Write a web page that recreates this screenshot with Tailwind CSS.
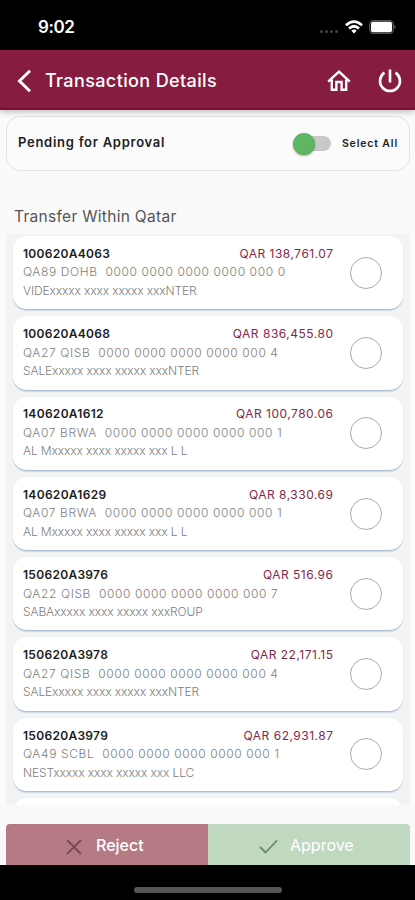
<!DOCTYPE html>
<html lang="en">
<head>
<meta charset="utf-8">
<title>Transaction Details</title>
<script src="https://cdn.jsdelivr.net/npm/@tailwindcss/browser@4"></script>
</head>
<body class="h-[900px] w-[415px] overflow-hidden bg-[#fafafa] font-['Inter','Liberation_Sans',sans-serif]">
<div class="flex h-[900px] flex-col">
  <div class="flex h-[50px] shrink-0 items-center bg-black pt-1 pl-[38px] pr-[19px] text-white">
    <span class="text-[17px] leading-5 font-semibold tracking-[-0.4px]">9:02</span>
    <div class="ml-auto flex items-center">
      <div class="mt-2 mr-[7px] flex gap-[2px]">
        <i class="size-[3px] rounded-full bg-[#444]"></i><i class="size-[3px] rounded-full bg-[#444]"></i><i class="size-[3px] rounded-full bg-[#444]"></i><i class="size-[3px] rounded-full bg-[#444]"></i>
      </div>
      <svg class="mr-[6px] h-[14px] w-[18px]" viewBox="0 0 18 14" fill="none" stroke="#fff" stroke-width="2.8"><path d="M1 5.2Q9-2 17 5.2M4 8.5Q9 4 14 8.5"/><path d="M9 13.5 6.3 10.7Q9 8.5 11.7 10.7Z" fill="#fff" stroke="none"/></svg>
      <svg class="h-[14px] w-[27px]" viewBox="0 0 27 14"><rect x=".7" y=".7" width="23.6" height="12.6" rx="3.5" fill="none" stroke="#555" stroke-width="1.3"/><rect x="2" y="1.7" width="21" height="10.6" rx="2" fill="#fff"/><path d="M25.5 4.7q2 2.3 0 4.6z" fill="#777"/></svg>
    </div>
  </div>
  <header class="z-10 flex h-[60px] shrink-0 items-center border-b-2 border-[#790f35] bg-[#861d41] pt-[3px] pl-[17px] pr-[12px] text-white shadow-[0_2px_6px_rgba(0,0,0,0.25)]">
    <svg class="h-6 w-4" viewBox="0 0 16 24" fill="none" stroke="#fff" stroke-width="3"><path d="M13 1.7 2.5 12 13 22.3"/></svg>
    <h1 class="ml-[12px] text-[18px] leading-6 font-medium tracking-[0.38px] whitespace-nowrap">Transaction Details</h1>
    <svg class="ml-auto h-[26px] w-6" viewBox="0 0 24 26" fill="none" stroke="#fff" stroke-width="2.4"><path d="M1.2 13.6 12 3.6 22.8 13.6M4.8 11.5V21.8H9.4V14H14.6V21.8H19.2V11.5"/></svg>
    <svg class="ml-[26px] h-[26px] w-[26px]" viewBox="0 0 26 26" fill="none" stroke="#fff" stroke-width="2.6"><path d="M13 1.6v13M7.5 4.7a10 10 0 1 0 11 0"/></svg>
  </header>
  <section class="mr-[5px] ml-[6px] mt-[6px] flex h-[55px] shrink-0 items-center rounded-[14px] border border-[#e2e2e2] bg-[#fbfbfb] pr-[11px] pb-1 pl-[11px] text-[#222]">
    <span class="text-[13px] leading-5 font-semibold tracking-[0.73px] whitespace-nowrap">Pending for Approval</span>
    <div class="mt-1 ml-auto flex h-[15px] w-[37px] items-center rounded-full bg-[#c9c9c9]">
      <i class="-ml-[1px] size-[22px] shrink-0 rounded-full bg-[#5fb562] shadow-[0_1px_2px_rgba(0,0,0,0.35)]"></i>
    </div>
    <span class="mt-1 ml-[11px] text-[10.5px] leading-4 font-semibold tracking-[0.85px] whitespace-nowrap">Select All</span>
  </section>
  <h2 class="mt-[32px] ml-[14px] h-[31px] shrink-0 text-[15.5px] leading-7 tracking-[0.3px] text-[#555]">Transfer Within Qatar</h2>
  <main id="list" class="mr-[5px] ml-[6px] h-[571px] shrink-0 overflow-hidden bg-[#f2f3f4] px-[7px] pt-[2px]"></main>
  <footer class="mr-[5px] ml-[6px] mt-[19px] flex h-[41px] shrink-0 overflow-hidden rounded-t-[4px] text-[16px] font-medium text-white">
    <div class="flex w-[202px] items-center bg-[#b57a83] pl-[60px]">
      <svg class="mt-1 size-[16px]" viewBox="0 0 16 16" fill="none" stroke="#774952" stroke-width="1.8"><path d="m1 1 14 14M15 1 1 15"/></svg>
      <span class="ml-[14px]">Reject</span>
    </div>
    <div class="flex flex-1 items-center bg-[#bfd8bf] pl-[51px]">
      <svg class="mt-1 h-[15px] w-[19px]" viewBox="0 0 19 15" fill="none" stroke="#6a866c" stroke-width="1.8"><path d="m1 8 5.5 5.5L18 1.5"/></svg>
      <span class="ml-[12px] font-normal">Approve</span>
    </div>
  </footer>
  <div class="flex h-[35px] shrink-0 items-center justify-center bg-black pt-[14px]"><i class="h-[6px] w-[148px] rounded-full bg-[#555]"></i></div>
</div>
<script>
const rows = [
  ['100620A4063', '138,761.07', 'QA89 DOHB', '0', 'VIDExxxxx xxxx xxxxx xxxNTER'],
  ['100620A4068', '836,455.80', 'QA27 QISB', '4', 'SALExxxxx xxxx xxxxx xxxNTER'],
  ['140620A1612', '100,780.06', 'QA07 BRWA', '1', 'AL Mxxxxx xxxx xxxxx xxx L L'],
  ['140620A1629', '8,330.69', 'QA07 BRWA', '1', 'AL Mxxxxx xxxx xxxxx xxx L L'],
  ['150620A3976', '516.96', 'QA22 QISB', '7', 'SABAxxxxx xxxx xxxxx xxxROUP'],
  ['150620A3978', '22,171.15', 'QA27 QISB', '4', 'SALExxxxx xxxx xxxxx xxxNTER'],
  ['150620A3979', '62,931.87', 'QA49 SCBL', '1', 'NESTxxxxx xxxx xxxxx xxx LLC']
];
const card = 'mb-[6px] h-[74.3px] rounded-[14px] border-b border-[#a9c0d4] bg-white pr-[21px] pl-[10px] shadow-[0_1px_1px_rgba(150,180,205,0.4)] flex items-center';
document.getElementById('list').innerHTML = rows.map(([id, amount, bank, end, name]) => `
<article class="${card}">
  <div class="w-[310px] shrink-0 text-[12px] leading-[18.5px] text-[#808080]">
    <div class="flex justify-between"><b class="font-semibold tracking-[0.3px] text-[#1c1c1c]">${id}</b><span class="-mr-[0.5px] tracking-[0.5px] text-[#852848]">QAR ${amount}</span></div>
    <div class="font-light tracking-[0.6px] whitespace-pre">${bank}  0000 0000 0000 0000 000 ${end}</div>
    <div class="font-light tracking-[-0.12px]">${name}</div>
  </div>
  <i class="ml-auto size-[32px] shrink-0 rounded-full border border-[#aaa]"></i>
</article>`).join('') + `<div class="h-10 rounded-[14px] bg-white"></div>`;
</script>
</body>
</html>
